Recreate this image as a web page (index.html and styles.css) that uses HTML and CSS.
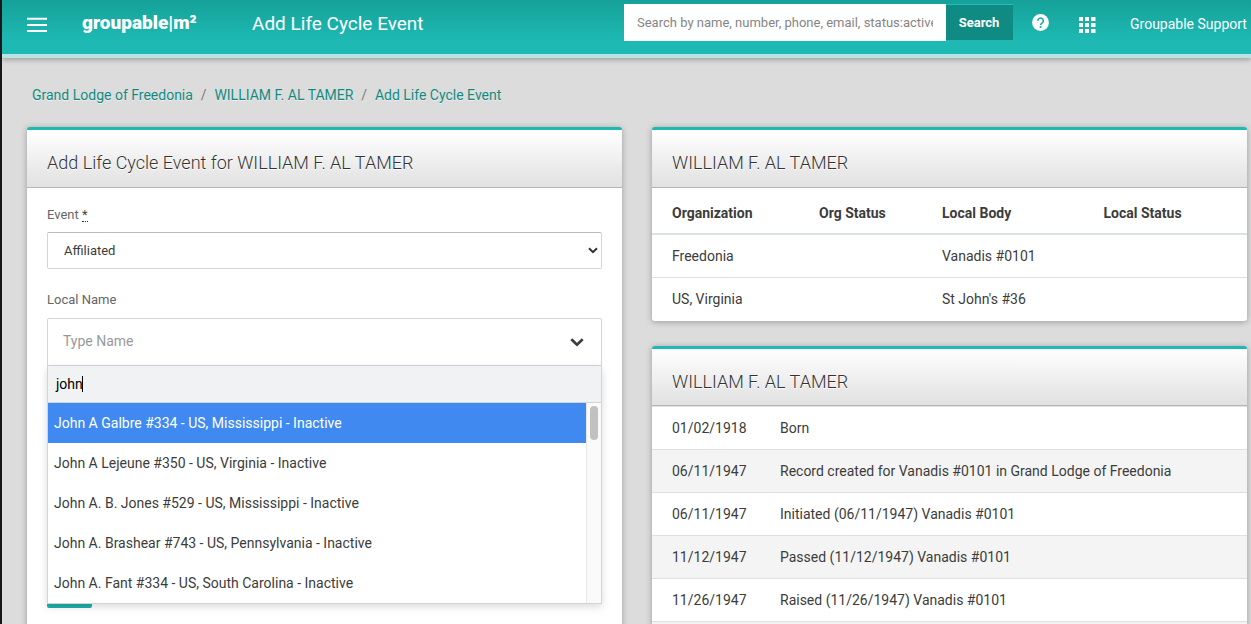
FILE: index.html
```html
<!DOCTYPE html>
<html lang="en">
<head>
<meta charset="utf-8">
<title>Add Life Cycle Event</title>
<link rel="stylesheet" href="styles.css">
</head>
<body>
<div class="page">
  <header class="topbar">
    <svg class="menu" width="20" height="16" viewBox="0 0 20 16"><path d="M0 1.800h20M0 7.900h20M0 14h20" stroke="#fff" stroke-width="2"/></svg>
    <div class="brand"><span>groupable|m²</span></div>
    <div class="screen-title"><span>Add Life Cycle Event</span></div>
    <div class="search">
      <div class="search-field"><span>Search by name, number, phone, email, status:active</span></div>
      <button class="search-button"><span>Search</span></button>
    </div>
    <svg class="help" width="17" height="17" viewBox="0 0 17 17"><circle cx="8.500" cy="8.500" r="8.400" fill="#fff"/><path d="M5.900 6.700a2.700 2.700 0 1 1 4.500 2C9.200 9.600 8.600 10 8.600 11" fill="none" stroke="#1aaba5" stroke-width="1.600"/><path d="M7.700 12.200h1.800v1.800H7.700z" fill="#1aaba5"/></svg>
    <svg class="apps" width="17" height="17" viewBox="0 0 17 17"><path fill="#fff" d="M0 0h4v4H0zM6 0h4v4H6zM12 0h4.500v4H12zM0 6h4v4H0zM6 6h4v4H6zM12 6h4.500v4H12zM0 12h4v4H0zM6 12h4v4H6zM12 12h4.500v4H12z"/></svg>
    <div class="user"><span>Groupable Support</span></div>
  </header>
  <nav class="crumbs">
    <a><span>Grand Lodge of Freedonia</span></a><i>/</i><a><span>WILLIAM F. AL TAMER</span></a><i>/</i><a><span>Add Life Cycle Event</span></a>
  </nav>
  <main class="columns">
    <section class="card form-card">
      <h2><span>Add Life Cycle Event for WILLIAM F. AL TAMER</span></h2>
      <div class="form">
        <label class="label"><span>Event <abbr>*</abbr></span></label>
        <div class="select"><span>Affiliated</span>
          <svg width="10" height="7" viewBox="0 0 10 7"><path d="M1 1.200l4 4 4-4" fill="none" stroke="#333" stroke-width="2"/></svg>
        </div>
        <label class="label local"><span>Local Name</span></label>
        <div class="combo">
          <div class="combo-value"><span>Type Name</span>
            <svg width="14" height="9" viewBox="0 0 14 9"><path d="M1.300 1.300L7 6.800l5.700-5.500" fill="none" stroke="#3c3c3c" stroke-width="2.600"/></svg>
          </div>
          <div class="dropdown">
            <div class="query"><span>john</span><b class="caret"></b></div>
            <div class="list">
              <ul>
                <li class="active"><span>John A Galbre #334 - US, Mississippi - Inactive</span></li>
                <li><span>John A Lejeune #350 - US, Virginia - Inactive</span></li>
                <li><span>John A. B. Jones #529 - US, Mississippi - Inactive</span></li>
                <li><span>John A. Brashear #743 - US, Pennsylvania - Inactive</span></li>
                <li><span>John A. Fant #334 - US, South Carolina - Inactive</span></li>
              </ul>
              <div class="track"><div class="thumb"></div></div>
            </div>
          </div>
        </div>
        <div class="submit"></div>
      </div>
    </section>
    <div class="side">
      <section class="card">
        <h2><span>WILLIAM F. AL TAMER</span></h2>
        <div class="row four head"><span>Organization</span><span>Org Status</span><span>Local Body</span><span>Local Status</span></div>
        <div class="row four"><span>Freedonia</span><span></span><span>Vanadis #0101</span><span></span></div>
        <div class="row four last"><span>US, Virginia</span><span></span><span>St John's #36</span><span></span></div>
      </section>
      <section class="card history">
        <h2><span>WILLIAM F. AL TAMER</span></h2>
        <div class="row two"><span>01/02/1918</span><span>Born</span></div>
        <div class="row two"><span>06/11/1947</span><span>Record created for Vanadis #0101 in Grand Lodge of Freedonia</span></div>
        <div class="row two"><span>06/11/1947</span><span>Initiated (06/11/1947) Vanadis #0101</span></div>
        <div class="row two"><span>11/12/1947</span><span>Passed (11/12/1947) Vanadis #0101</span></div>
        <div class="row two"><span>11/26/1947</span><span>Raised (11/26/1947) Vanadis #0101</span></div>
        <div class="row two"><span></span><span></span></div>
      </section>
    </div>
  </main>
</div>
</body>
</html>
```
FILE: styles.css
```css
* { box-sizing: border-box; }
body { margin: 0; font: 14px/20px Roboto, sans-serif; color: #3c3c3c; background: #dcdcdc; overflow: hidden; }
.page { height: 624px; overflow: hidden; border-left: 2px solid #15171a; background: #dcdcdc; }
.topbar { display: flex; align-items: flex-start; height: 58px; border-bottom: 4px solid #b9e1e6; background: linear-gradient(#15a199, #1eb9b3 75%); color: #fff; box-shadow: 0 2px 5px rgba(0,0,0,.28); white-space: nowrap; }
.menu { margin: 17px 0 0 25px; flex: none; }
.brand { margin: 13px 0 0 35px; width: 170px; font-size: 19px; font-weight: 900; flex: none; }
.screen-title { margin-top: 14px; width: 372px; font-size: 19px; flex: none; }
.search { display: flex; margin-top: 4px; flex: none; }
.search-field { width: 322px; height: 37px; padding: 9px 13px; background: #fff; color: #858585; font-size: 13px; }
.search-field span { display: block; overflow: hidden; }
.search-button { width: 67px; height: 36px; margin: 0; padding: 0 1px 0 0; border: 0; border-top: 1px solid #20beb8; background: #108b83; color: #fff; font: 700 13px/20px Roboto, sans-serif; }
.help { margin: 14px 0 0 19px; flex: none; }
.apps { margin: 17px 0 0 30px; flex: none; }
.user { margin: 14px 0 0 34px; }
.crumbs { display: flex; height: 69px; padding: 27px 0 0 30px; color: #108a80; text-shadow: 0 1px #eee; }
.crumbs i { width: 21.500px; text-align: center; font-style: normal; color: #777; }
.columns { display: grid; grid-template-columns: 595px 595px; gap: 30px; padding-left: 25px; align-items: start; }
.card { background: #fff; border-top: 3px solid #1eb9b3; border-radius: 3px; box-shadow: 0 1px 6px rgba(0,0,0,.3); }
.form-card { height: 540px; }
.card h2 { margin: 0; height: 58px; padding: 22px 20px 0; border-bottom: 1px solid #b5b5b8; background: linear-gradient(#fff, #e1e1e1); font-size: 18px; line-height: 22px; font-weight: 300; color: #333; text-shadow: 0 1px #fff; }
.form { padding: 17px 20px; }
.label { display: block; height: 27px; color: #666; font-size: 13px; }
.label abbr { border-bottom: 1px dotted #333; display: inline-block; line-height: 13px; color: #444; }
.select { display: flex; justify-content: space-between; align-items: center; height: 37px; padding: 0 3px 0 16px; border: 1px solid #d2d4de; border-top-color: #b8bac6; border-radius: 2px; font-size: 13px; }
.label.local { margin-top: 21px; height: 28px; }
.combo { position: relative; }
.combo-value { display: flex; justify-content: space-between; align-items: center; height: 48px; padding: 0 17px 2px 15px; border: 1px solid #d2d4dc; border-radius: 2px 2px 0 0; color: #999; }
.combo-value svg { margin-top: 2px; }
.dropdown { position: absolute; left: 0; top: 48px; width: 555px; border: 1px solid #d2d4dc; border-top: 0; background: #fff; box-shadow: 0 3px 8px rgba(0,0,0,.14); }
.query { display: flex; align-items: center; height: 37px; padding-left: 8px; border-bottom: 1px solid #d2d4dc; background: #f1f2f4; color: #000; }
.caret { width: 1px; height: 16px; margin-left: -1px; background: #000; }
.list { display: flex; height: 200px; }
.list ul { width: 538px; margin: 0; padding: 0; list-style: none; }
.list li { height: 40px; padding: 10px 6px; }
.list .active { background: #4089f0; color: #fff; }
.track { width: 15px; padding: 3px; border-left: 1px solid #e8e8e8; background: #fafafa; }
.thumb { width: 8px; height: 34px; border-radius: 4px; background: #c1c1c1; }
.submit { width: 45px; height: 34px; margin-top: 208px; border-radius: 2px; background: #1eb0a9; }
.side { display: grid; gap: 25px; }
.row { display: grid; align-items: center; height: 43px; padding: 0 20px; border-bottom: 1px solid #dee0e4; }
.four { grid-template-columns: 147px 123px 161.500px 1fr; }
.two { grid-template-columns: 108px 1fr; }
.row.head { height: 47px; padding-top: 4px; border-bottom: 2px solid #dce1e6; font-weight: 700; }
.row.last { padding-bottom: 1px; }
.row:last-child { border-bottom: 0; }
.history h2 { height: 57px; }
.history h2 + .row { height: 44px; border-top: 1px solid #dee0e4; }
.history .row:nth-child(odd) { background: #f4f4f4; }
```
